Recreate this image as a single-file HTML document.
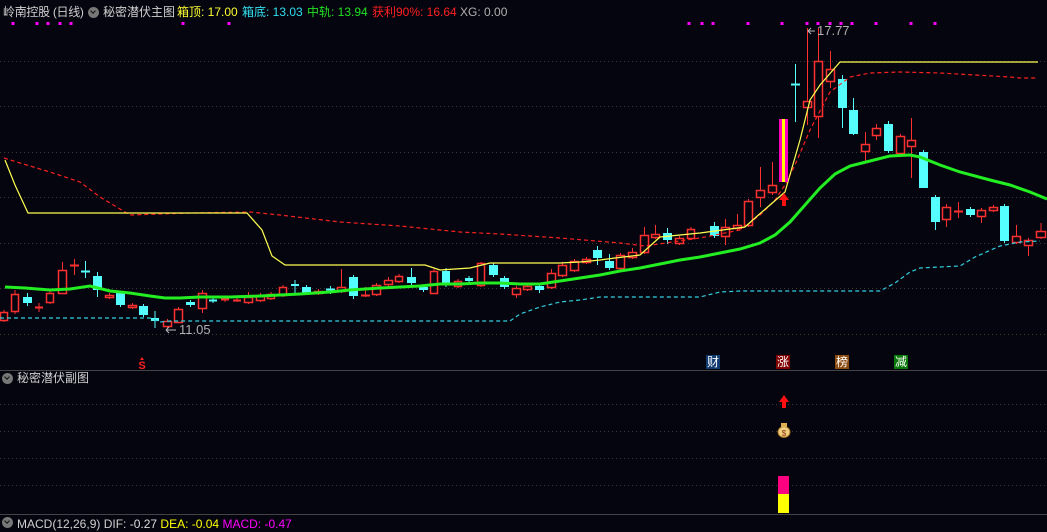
<!DOCTYPE html>
<html><head><meta charset="utf-8"><style>
body{margin:0;background:#05050f;width:1047px;height:520px;overflow:hidden;position:relative;font-family:"Liberation Sans","Noto Sans CJK SC",sans-serif;}
.t{position:absolute;font-size:12px;white-space:nowrap;line-height:16px}
.ic{position:absolute;width:11px;height:11px;border-radius:50%;background:#777}
.ic:after{content:"";position:absolute;left:3px;top:2px;width:3px;height:3px;border-right:1.5px solid #111;border-bottom:1.5px solid #111;transform:rotate(45deg)}
.bx{position:absolute;width:14px;height:14px;font-size:12px;line-height:14px;text-align:center;color:#fff}
</style></head><body>
<svg id="s" width="1047" height="520" style="position:absolute;left:0;top:0">
<g stroke="#3a3a3a" stroke-dasharray="1 3" stroke-width="1">
<line x1="0" y1="61.5" x2="1047" y2="61.5"/><line x1="0" y1="106.5" x2="1047" y2="106.5"/><line x1="0" y1="152.5" x2="1047" y2="152.5"/><line x1="0" y1="197.5" x2="1047" y2="197.5"/><line x1="0" y1="243.5" x2="1047" y2="243.5"/><line x1="0" y1="288.5" x2="1047" y2="288.5"/><line x1="0" y1="334.5" x2="1047" y2="334.5"/>
<line x1="0" y1="404.5" x2="1047" y2="404.5"/><line x1="0" y1="431.5" x2="1047" y2="431.5"/><line x1="0" y1="458.5" x2="1047" y2="458.5"/><line x1="0" y1="485.5" x2="1047" y2="485.5"/>
</g>
<line x1="0" y1="370.5" x2="1047" y2="370.5" stroke="#444"/>
<line x1="0" y1="514.5" x2="1047" y2="514.5" stroke="#444"/>
<g id="cd"></g>
<polyline fill="none" stroke="#ff2020" stroke-width="1.2" stroke-dasharray="4 3" points="4,158 20,163 50,172 80,182 100,197 130,215 190,213 250,212 280,215 340,222 400,226 460,232 500,234 560,238 620,243 645,246 700,238 740,230 760,215 775,200 785,185 795,165 810,130 830,92 850,77 870,73 900,72 940,73 1010,77 1020,78 1038,78"/>
<polyline fill="none" stroke="#ffff50" stroke-width="1.2" points="5,160 15,185 28,213 247,213 262,230 272,256 285,265 425,265 440,270 470,268 490,263 560,263 580,262 600,260 615,258 640,255 650,246 660,237 700,233 745,227 755,218 770,205 785,192 800,140 810,100 820,85 840,62 1038,62"/>
<polyline fill="none" stroke="#22ee22" stroke-width="3" points="5,287 25,288 50,290 70,289 90,286 110,291 130,293 150,296 165,298 180,298 200,297 230,297 260,296 280,295 300,294 330,292 350,290 380,288 400,287 420,286 440,284 460,284 480,283 500,283 520,284 540,284 560,281 580,278 600,275 620,271 640,268 660,264 680,260 700,257 720,253 740,249 760,243 775,235 790,222 805,205 820,188 835,174 850,166 870,161 890,156 910,155 920,157 940,165 960,172 990,180 1010,185 1030,192 1047,199"/>
<polyline fill="none" stroke="#30d0e0" stroke-width="1.2" stroke-dasharray="4 3" points="0,318 150,318 160,322 170,321 510,321 520,314 540,307 560,302 580,300 600,297 700,297 720,292 740,291 880,291 895,283 910,272 920,268 960,266 975,257 1000,246 1020,242 1040,241"/>
<rect x="779" y="119" width="3" height="63" fill="#ff00c0"/><rect x="782" y="119" width="3" height="63" fill="#ffff00"/><rect x="785" y="119" width="3" height="63" fill="#ff00c0"/>
<path d="M784 193 L789 200 L786 200 L786 206 L782 206 L782 200 L779 200Z" fill="#ff1010"/>
<g fill="#ff00ff" id="dots"></g>
<path d="M808 31 L815 31 M808 31 L811 28 M808 31 L811 34" stroke="#bbb" fill="none"/>
<path d="M166 330 L176 330 M166 330 L169 327 M166 330 L169 333" stroke="#bbb" fill="none"/>
<path d="M784 395 L789 402 L786 402 L786 408 L782 408 L782 402 L779 402Z" fill="#ff1010"/>
<ellipse cx="784" cy="432" rx="6" ry="5.5" fill="#f0d080" stroke="#a07020"/><rect x="781" y="423" width="6" height="4" fill="#e0b050"/>
<text x="784" y="436" font-size="8" text-anchor="middle" fill="#8a3010" font-family="Liberation Sans">$</text>
<rect x="778" y="476" width="11" height="18" fill="#ff0080"/><rect x="778" y="494" width="11" height="19" fill="#ffff00"/>
<path d="M142 357 L144 360 L140 360Z" fill="#ff2020"/>
<text x="142" y="369" font-size="11" text-anchor="middle" fill="#ff2020" font-weight="bold" font-family="Liberation Sans">S</text>
</svg>
<div class="t" style="left:3px;top:4px;color:#d0d0d0;letter-spacing:-0.3px">岭南控股 (日线)</div>
<div class="ic" style="left:88px;top:7px"></div>
<div class="t" style="left:103px;top:4px;color:#d0d0d0">秘密潜伏主图</div>
<div class="t" style="left:177px;top:4px;color:#ffff30">箱顶: 17.00</div>
<div class="t" style="left:242px;top:4px;color:#30e0f0">箱底: 13.03</div>
<div class="t" style="left:307px;top:4px;color:#20e020">中轨: 13.94</div>
<div class="t" style="left:372px;top:4px;color:#ff2020">获利90%: 16.64</div>
<div class="t" style="left:460px;top:4px;color:#b0b0b0">XG: 0.00</div>
<div class="t" style="left:817px;top:23px;color:#b0b0b0;font-size:13px">17.77</div>
<div class="t" style="left:179px;top:322px;color:#b0b0b0;font-size:13px">11.05</div>
<div class="bx" style="left:706px;top:355px;background:#103a70">财</div>
<div class="bx" style="left:776px;top:355px;background:#800000">涨</div>
<div class="bx" style="left:835px;top:355px;background:#8a4a10">榜</div>
<div class="bx" style="left:894px;top:355px;background:#087808">减</div>
<div class="ic" style="left:2px;top:373px"></div>
<div class="t" style="left:17px;top:370px;color:#d0d0d0">秘密潜伏副图</div>
<div class="ic" style="left:2px;top:517px"></div>
<div class="t" style="left:17px;top:516px;color:#d0d0d0">MACD(12,26,9) DIF: <span style="color:#ddd">-0.27</span> <span style="color:#ffff00">DEA: -0.04</span> <span style="color:#ff00ff">MACD: -0.47</span></div>
<script>
var R=1,C=0;
var c=[[0,8,312,320,310,322,R],[11,19,294,311,290,314,R],[23,32,297,303,293,306,C],[35,43,307,307,303,312,R],[46,54,293,302,291,304,R],[58,67,270,293,262,293,R],[70,79,265,265,259,275,R],[81,90,271,271,261,278,C],[93,102,276,290,272,297,C],[105,114,295,297,293,299,R],[116,125,293,305,291,307,C],[128,137,305,307,303,309,R],[139,148,306,315,304,317,C],[151,159,318,321,311,328,C],[163,172,321,326,319,328,R],[174,183,309,322,307,322,R],[186,195,302,305,300,307,C],[198,207,293,308,290,313,R],[209,217,300,300,297,303,C],[221,229,299,300,297,302,R],[233,241,300,300,298,302,R],[244,253,297,302,292,304,R],[256,265,296,300,293,302,R],[267,275,294,298,292,300,R],[279,287,287,295,285,297,R],[291,299,284,286,280,294,C],[302,311,287,293,285,295,C],[314,323,291,293,289,295,R],[326,335,289,289,286,294,C],[337,346,287,291,269,293,R],[349,358,277,296,275,299,C],[361,370,295,296,287,297,R],[372,381,285,294,283,296,R],[384,393,280,284,277,286,R],[395,403,276,281,274,283,R],[407,416,277,283,268,285,C],[419,428,287,290,285,292,C],[430,438,271,293,269,294,R],[442,450,271,285,268,287,C],[454,462,281,286,279,288,R],[465,473,278,281,276,283,C],[477,485,263,285,262,287,R],[489,498,265,275,263,277,C],[500,509,278,287,276,289,C],[512,521,288,294,286,298,R],[523,532,286,289,284,291,R],[535,544,286,290,284,293,C],[547,556,273,287,269,289,R],[558,567,265,275,262,277,R],[570,579,261,270,259,272,R],[582,591,259,262,257,264,R],[593,602,250,258,246,265,C],[605,614,261,268,254,270,C],[616,625,255,268,253,270,R],[628,637,252,257,248,259,R],[640,649,235,252,227,254,R],[651,660,234,237,225,239,R],[663,672,233,240,228,244,C],[675,684,238,243,236,245,R],[687,695,229,238,227,240,R],[710,719,226,236,222,238,C],[721,730,227,236,219,245,R],[733,742,225,228,214,230,R],[744,753,201,225,199,227,R],[756,765,190,197,167,207,R],[768,777,185,192,162,195,R],[791,800,84,84,64,122,C],[803,812,101,107,28,125,R],[814,823,61,116,28,138,R],[826,835,69,81,51,88,R],[838,847,79,108,75,128,C],[849,858,110,134,98,135,C],[861,870,144,151,132,163,R],[872,881,128,135,124,140,R],[884,893,124,151,121,153,C],[896,905,136,153,134,155,R],[907,916,140,146,118,178,R],[919,928,152,188,150,188,C],[931,940,197,222,195,230,C],[942,951,207,219,204,227,R],[954,963,211,211,202,218,R],[966,975,209,215,207,217,C],[977,986,210,216,208,223,R],[989,998,207,210,205,212,R],[1000,1009,206,241,204,243,C],[1012,1021,236,242,225,244,R],[1024,1033,240,245,238,256,R],[1036,1046,231,237,223,239,R]];
var h='';
c.forEach(function(a){var x1=a[0],x2=a[1],t=a[2],b=a[3],wt=a[4],wb=a[5],col=a[6]?'#ff3030':'#55ffff',m=((x1+x2)/2).toFixed(1);
h+='<line x1="'+m+'" y1="'+wt+'" x2="'+m+'" y2="'+wb+'" stroke="'+col+'"/>';
if(b-t<2){h+='<line x1="'+x1+'" y1="'+(t+0.5)+'" x2="'+x2+'" y2="'+(t+0.5)+'" stroke="'+col+'" stroke-width="2"/>';}
else if(a[6]){h+='<rect x="'+(x1+0.5)+'" y="'+(t+0.5)+'" width="'+(x2-x1-1)+'" height="'+(b-t)+'" fill="#05050f" stroke="'+col+'" stroke-width="1.5"/>';}
else{h+='<rect x="'+x1+'" y="'+t+'" width="'+(x2-x1)+'" height="'+(b-t)+'" fill="'+col+'"/>';}});
document.getElementById('cd').innerHTML=h;
var d=[13,37,48,60,71,183,229,689,702,713,748,782,807,818,830,841,852,876,911,935],s='';
d.forEach(function(x){s+='<rect x="'+(x-1.5)+'" y="22" width="3" height="3"/>';});
document.getElementById('dots').innerHTML=s;
</script>
</body></html>
